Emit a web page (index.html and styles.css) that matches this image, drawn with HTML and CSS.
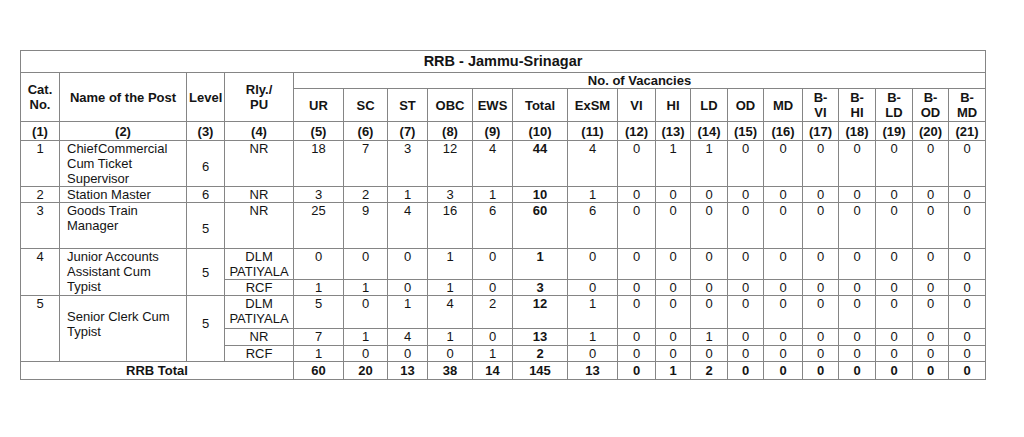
FILE: index.html
```html
<!DOCTYPE html>
<html>
<head>
<meta charset="utf-8">
<link rel="stylesheet" href="styles.css">
</head>
<body>
<div class="page">
<table class="vac">
<colgroup>
<col style="width:39px"><col style="width:127px"><col style="width:38px"><col style="width:69px">
<col style="width:50px"><col style="width:44px"><col style="width:40px"><col style="width:45px"><col style="width:40px"><col style="width:55px"><col style="width:50px">
<col style="width:38px"><col style="width:35px"><col style="width:37px"><col style="width:36px"><col style="width:39px"><col style="width:36px"><col style="width:37px"><col style="width:37px"><col style="width:36px"><col style="width:37px">
</colgroup>
<thead>
<tr class="r-title"><th colspan="21" class="title">RRB - Jammu-Srinagar</th></tr>
<tr class="r-vac">
<th rowspan="2" class="hd">Cat.<br>No.</th>
<th rowspan="2" class="hd">Name of the Post</th>
<th rowspan="2" class="hd">Level</th>
<th rowspan="2" class="hd">Rly./<br>PU</th>
<th colspan="17" class="hd">No. of Vacancies</th>
</tr>
<tr class="r-head">
<th class="hd">UR</th><th class="hd">SC</th><th class="hd">ST</th><th class="hd">OBC</th><th class="hd">EWS</th><th class="hd">Total</th><th class="hd">ExSM</th><th class="hd">VI</th><th class="hd">HI</th><th class="hd">LD</th><th class="hd">OD</th><th class="hd">MD</th><th class="hd">B-<br>VI</th><th class="hd">B-<br>HI</th><th class="hd">B-<br>LD</th><th class="hd">B-<br>OD</th><th class="hd">B-<br>MD</th>
</tr>
<tr class="r-num">
<th>(1)</th><th>(2)</th><th>(3)</th><th>(4)</th><th>(5)</th><th>(6)</th><th>(7)</th><th>(8)</th><th>(9)</th><th>(10)</th><th>(11)</th><th>(12)</th><th>(13)</th><th>(14)</th><th>(15)</th><th>(16)</th><th>(17)</th><th>(18)</th><th>(19)</th><th>(20)</th><th>(21)</th>
</tr>
</thead>
<tbody>
<tr class="r1">
<td>1</td><td class="name"><span class="tight">Chief Commercial</span> Cum Ticket Supervisor</td><td class="lvl">6</td><td>NR</td>
<td>18</td><td>7</td><td>3</td><td>12</td><td>4</td><td class="b">44</td><td>4</td><td>0</td><td>1</td><td>1</td><td>0</td><td>0</td><td>0</td><td>0</td><td>0</td><td>0</td><td>0</td>
</tr>
<tr class="r2">
<td>2</td><td class="name">Station Master</td><td>6</td><td>NR</td>
<td>3</td><td>2</td><td>1</td><td>3</td><td>1</td><td class="b">10</td><td>1</td><td>0</td><td>0</td><td>0</td><td>0</td><td>0</td><td>0</td><td>0</td><td>0</td><td>0</td><td>0</td>
</tr>
<tr class="r3">
<td>3</td><td class="name">Goods Train<br>Manager</td><td class="lvl">5</td><td>NR</td>
<td>25</td><td>9</td><td>4</td><td>16</td><td>6</td><td class="b">60</td><td>6</td><td>0</td><td>0</td><td>0</td><td>0</td><td>0</td><td>0</td><td>0</td><td>0</td><td>0</td><td>0</td>
</tr>
<tr class="r4a">
<td rowspan="2">4</td><td rowspan="2" class="name">Junior Accounts Assistant Cum Typist</td><td rowspan="2" class="mid">5</td><td>DLM<br>PATIYALA</td>
<td>0</td><td>0</td><td>0</td><td>1</td><td>0</td><td class="b">1</td><td>0</td><td>0</td><td>0</td><td>0</td><td>0</td><td>0</td><td>0</td><td>0</td><td>0</td><td>0</td><td>0</td>
</tr>
<tr class="r4b">
<td>RCF</td>
<td>1</td><td>1</td><td>0</td><td>1</td><td>0</td><td class="b">3</td><td>0</td><td>0</td><td>0</td><td>0</td><td>0</td><td>0</td><td>0</td><td>0</td><td>0</td><td>0</td><td>0</td>
</tr>
<tr class="r5a">
<td rowspan="3">5</td><td rowspan="3" class="name mid5">Senior Clerk Cum Typist</td><td rowspan="3" class="mid5">5</td><td>DLM<br>PATIYALA</td>
<td>5</td><td>0</td><td>1</td><td>4</td><td>2</td><td class="b">12</td><td>1</td><td>0</td><td>0</td><td>0</td><td>0</td><td>0</td><td>0</td><td>0</td><td>0</td><td>0</td><td>0</td>
</tr>
<tr class="r5b">
<td>NR</td>
<td>7</td><td>1</td><td>4</td><td>1</td><td>0</td><td class="b">13</td><td>1</td><td>0</td><td>0</td><td>1</td><td>0</td><td>0</td><td>0</td><td>0</td><td>0</td><td>0</td><td>0</td>
</tr>
<tr class="r5c">
<td>RCF</td>
<td>1</td><td>0</td><td>0</td><td>0</td><td>1</td><td class="b">2</td><td>0</td><td>0</td><td>0</td><td>0</td><td>0</td><td>0</td><td>0</td><td>0</td><td>0</td><td>0</td><td>0</td>
</tr>
<tr class="r-total">
<td colspan="4">RRB Total</td>
<td>60</td><td>20</td><td>13</td><td>38</td><td>14</td><td>145</td><td>13</td><td>0</td><td>1</td><td>2</td><td>0</td><td>0</td><td>0</td><td>0</td><td>0</td><td>0</td><td>0</td>
</tr>
</tbody>
</table>
</div>
</body>
</html>
```

FILE: styles.css
```css
html, body {
  margin: 0;
  padding: 0;
  background: #ffffff;
}

body {
  font-family: "Liberation Sans", Arial, sans-serif;
  color: #141414;
}

.page {
  padding: 50px 0 0 20px;
}

.vac {
  border-collapse: collapse;
  table-layout: fixed;
  width: 965px;
  font-size: 13px;
  line-height: 15px;
}

.vac th,
.vac td {
  border: 1px solid #858585;
  padding: 0 2px;
  text-align: center;
  vertical-align: top;
  overflow: hidden;
}

.vac th {
  font-weight: bold;
}

.vac .title {
  font-size: 14.5px;
  vertical-align: middle;
}

.vac .hd {
  vertical-align: middle;
}

.r-title { height: 22px; }
.r-vac { height: 16px; }
.r-head { height: 33px; }
.r-num { height: 19px; }
.r-num th { vertical-align: middle; }
.r1 { height: 45px; }
.r2 { height: 16px; }
.r3 { height: 46px; }
.r4a { height: 31px; }
.r4b { height: 16px; }
.r5a { height: 33px; }
.r5b { height: 17px; }
.r5c { height: 16px; }
.r-total { height: 18px; }

.vac td.name {
  text-align: left;
  padding-left: 7px;
}

.tight {
  word-spacing: -3px;
}

.vac td.lvl {
  vertical-align: middle;
  padding-top: 6px;
}

.vac td.mid {
  vertical-align: middle;
}

.vac td.mid5 {
  vertical-align: middle;
  padding-bottom: 10px;
}

.vac td.b {
  font-weight: bold;
}

.r-total td {
  font-weight: bold;
  vertical-align: middle;
}
```
